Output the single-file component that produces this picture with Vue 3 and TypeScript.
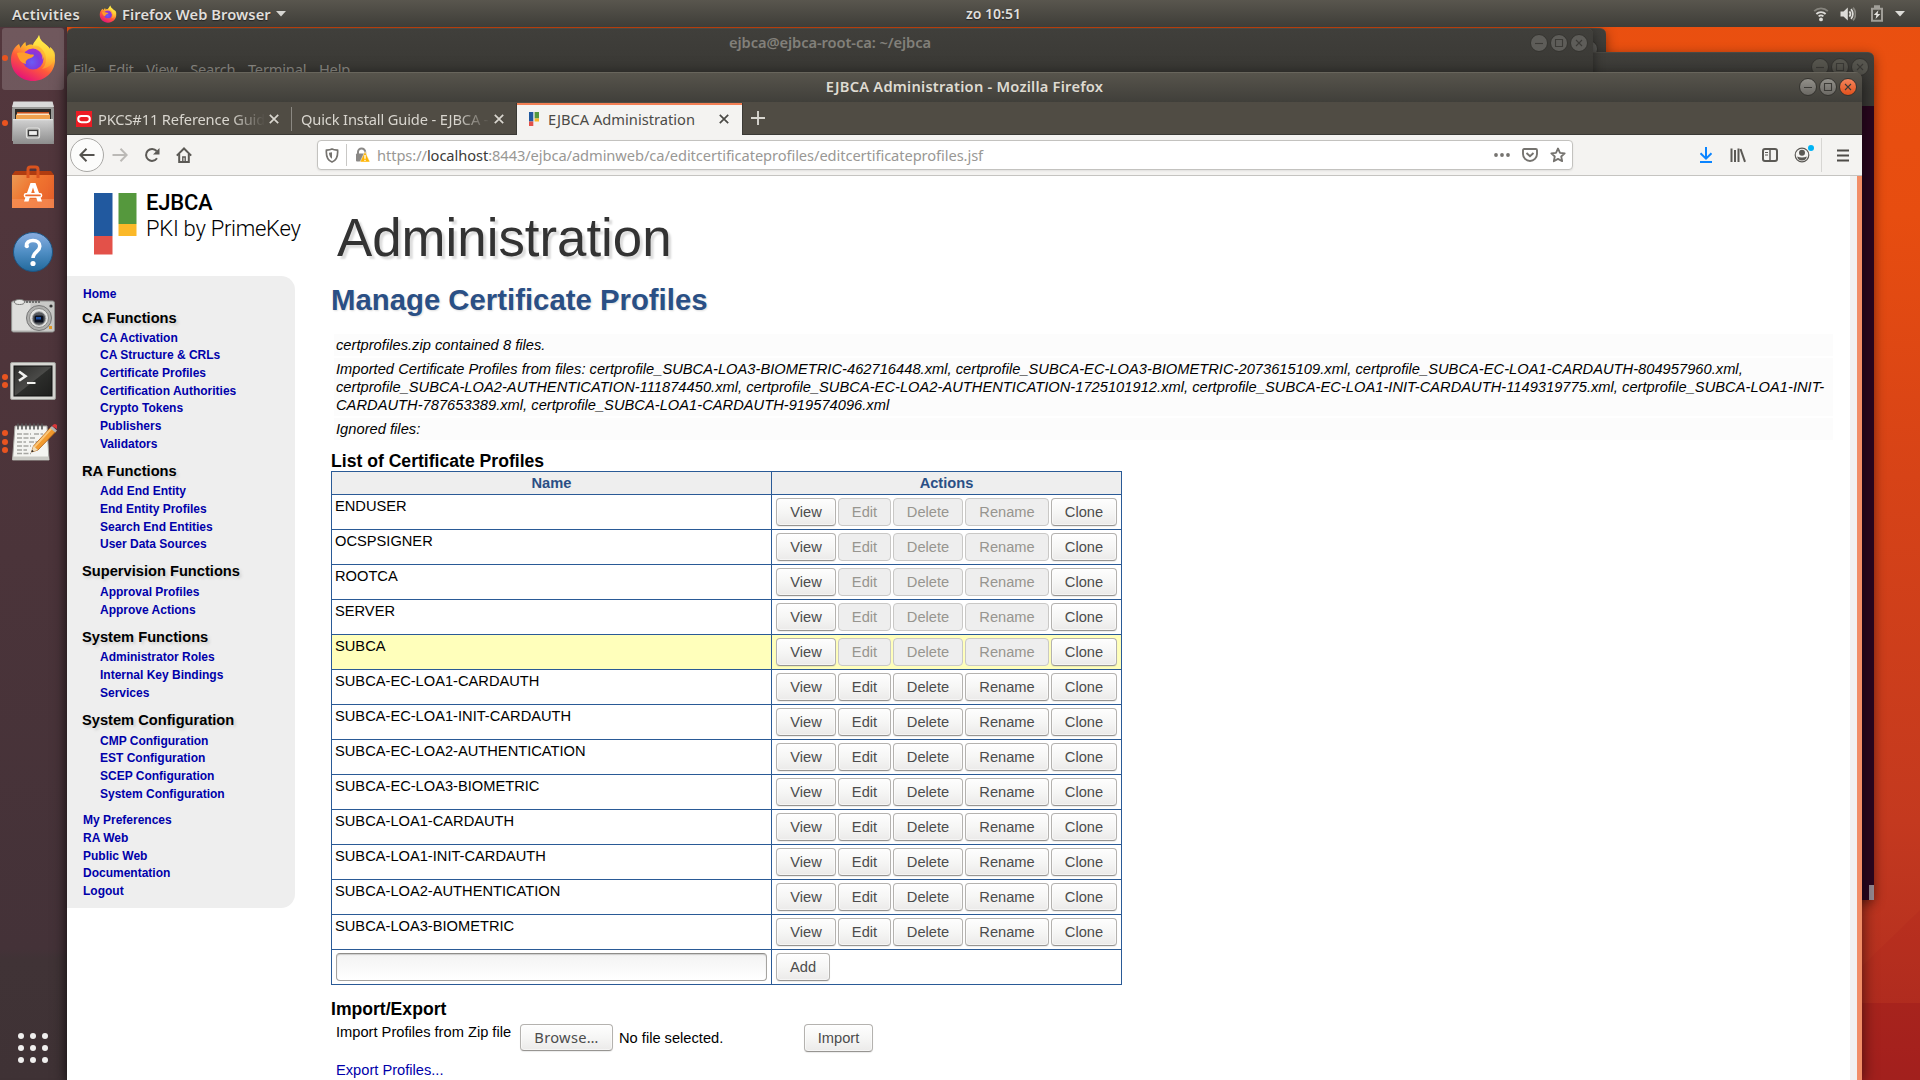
<script setup lang="ts">
interface NavGroup {
  title: string
  links: string[]
}

interface Profile {
  name: string
  fixed: boolean
  hovered?: boolean
}

const terminalMenu: string[] = ['File', 'Edit', 'View', 'Search', 'Terminal', 'Help']

const navGroups: NavGroup[] = [
  {
    title: 'CA Functions',
    links: [
      'CA Activation',
      'CA Structure & CRLs',
      'Certificate Profiles',
      'Certification Authorities',
      'Crypto Tokens',
      'Publishers',
      'Validators',
    ],
  },
  { title: 'RA Functions', links: ['Add End Entity', 'End Entity Profiles', 'Search End Entities', 'User Data Sources'] },
  { title: 'Supervision Functions', links: ['Approval Profiles', 'Approve Actions'] },
  { title: 'System Functions', links: ['Administrator Roles', 'Internal Key Bindings', 'Services'] },
  {
    title: 'System Configuration',
    links: ['CMP Configuration', 'EST Configuration', 'SCEP Configuration', 'System Configuration'],
  },
]

const footerLinks: string[] = ['My Preferences', 'RA Web', 'Public Web', 'Documentation', 'Logout']

const messages: string[][] = [
  ['certprofiles.zip contained 8 files.'],
  [
    'Imported Certificate Profiles from files: certprofile_SUBCA-LOA3-BIOMETRIC-462716448.xml, certprofile_SUBCA-EC-LOA3-BIOMETRIC-2073615109.xml, certprofile_SUBCA-EC-LOA1-CARDAUTH-804957960.xml,',
    'certprofile_SUBCA-LOA2-AUTHENTICATION-111874450.xml, certprofile_SUBCA-EC-LOA2-AUTHENTICATION-1725101912.xml, certprofile_SUBCA-EC-LOA1-INIT-CARDAUTH-1149319775.xml, certprofile_SUBCA-LOA1-INIT-',
    'CARDAUTH-787653389.xml, certprofile_SUBCA-LOA1-CARDAUTH-919574096.xml',
  ],
  ['Ignored files:'],
]

const profiles: Profile[] = [
  { name: 'ENDUSER', fixed: true },
  { name: 'OCSPSIGNER', fixed: true },
  { name: 'ROOTCA', fixed: true },
  { name: 'SERVER', fixed: true },
  { name: 'SUBCA', fixed: true, hovered: true },
  { name: 'SUBCA-EC-LOA1-CARDAUTH', fixed: false },
  { name: 'SUBCA-EC-LOA1-INIT-CARDAUTH', fixed: false },
  { name: 'SUBCA-EC-LOA2-AUTHENTICATION', fixed: false },
  { name: 'SUBCA-EC-LOA3-BIOMETRIC', fixed: false },
  { name: 'SUBCA-LOA1-CARDAUTH', fixed: false },
  { name: 'SUBCA-LOA1-INIT-CARDAUTH', fixed: false },
  { name: 'SUBCA-LOA2-AUTHENTICATION', fixed: false },
  { name: 'SUBCA-LOA3-BIOMETRIC', fixed: false },
]

const running: number[] = [1, 1, 0, 0, 0, 2, 3]
</script>

<template>
  <div class="desktop">
    <svg class="wallpaper" width="1920" height="1080" viewBox="0 0 1920 1080">
      <defs>
        <linearGradient id="wall" x1="0" y1="0" x2="0" y2="1">
          <stop offset="0" stop-color="#ea5010" />
          <stop offset="0.2" stop-color="#e74d10" />
          <stop offset="0.44" stop-color="#d74317" />
          <stop offset="0.76" stop-color="#c4391f" />
          <stop offset="1" stop-color="#ac2a20" />
        </linearGradient>
      </defs>
      <rect width="1920" height="1080" fill="url(#wall)" />
      <path d="M1800 1026 1920 910V1080H1800z" fill="#9c1022" opacity=".1" />
      <path d="M1800 1003H1920V1080H1800z" fill="#8e1018" opacity=".28" />
    </svg>

    <div class="win win-b"><i class="wbtn lone"></i></div>
    <div class="win win-c">
      <div class="win-buttons">
        <i class="wbtn"><svg viewBox="0 0 16 16"><path d="M4 8.5h8" /></svg></i>
        <i class="wbtn"><svg viewBox="0 0 16 16"><path d="M4.5 4.5h7v7h-7z" /></svg></i>
        <i class="wbtn"><svg viewBox="0 0 16 16"><path d="M5 5l6 6M11 5l-6 6" /></svg></i>
      </div>
      <div class="term-body"><i class="term-thumb"></i></div>
    </div>
    <div class="win win-a">
      <div class="win-title">ejbca@ejbca-root-ca: ~/ejbca</div>
      <div class="win-buttons">
        <i class="wbtn"><svg viewBox="0 0 16 16"><path d="M4 8.5h8" /></svg></i>
        <i class="wbtn"><svg viewBox="0 0 16 16"><path d="M4.5 4.5h7v7h-7z" /></svg></i>
        <i class="wbtn"><svg viewBox="0 0 16 16"><path d="M5 5l6 6M11 5l-6 6" /></svg></i>
      </div>
      <div class="term-menu"><span v-for="m in terminalMenu" :key="m">{{ m }}</span></div>
    </div>

    <header class="topbar">
      <span class="activities">Activities</span>
      <svg class="ff-small" width="18" height="18" viewBox="0 0 48 48"><use href="#firefox" /></svg>
      <span class="appname">Firefox Web Browser</span>
      <svg class="caret" width="10" height="6" viewBox="0 0 10 6"><path d="M0 0h10L5 5.5z" fill="#d6d5d1" /></svg>
      <span class="clock">zo 10:51</span>
      <div class="tray">
        <svg width="16" height="16" viewBox="0 0 16 16" fill="none" stroke="#dddcd8" stroke-width="1.8">
          <path d="M1.2 5.2a9.6 9.6 0 0 1 13.6 0" stroke="#86847d" />
          <path d="M3.4 8a6.5 6.5 0 0 1 9.2 0" />
          <path d="M5.6 10.4a3.6 3.6 0 0 1 4.8 0" />
          <circle cx="8" cy="13.4" r="1.9" fill="#dddcd8" stroke="none" />
        </svg>
        <svg width="16" height="16" viewBox="0 0 16 16" fill="none" stroke="#dddcd8" stroke-width="1.7">
          <path d="M0.5 5.4h3L7.8 1.6v12.8L3.5 10.6h-3z" fill="#dddcd8" stroke="none" />
          <path d="M9.4 5.4a4 4 0 0 1 0 5.2" />
          <path d="M11 3.2a7 7 0 0 1 0 9.6" />
          <path d="M13 1.6a9.5 9.5 0 0 1 0 12.8" stroke="#86847d" />
        </svg>
        <svg width="14" height="18" viewBox="0 0 14 18">
          <path d="M2 3.8h10v11.9H2zM5 1.2h4v2H5z" fill="none" stroke="#a09e98" stroke-width="2" />
          <path d="M8.4 5.2 3.8 10h2.6l-.8 4 4.8-5H7.6z" fill="#e2e1dd" />
        </svg>
        <svg width="10" height="6" viewBox="0 0 10 6"><path d="M0 0h10L5 5.5z" fill="#dddcd8" /></svg>
      </div>
    </header>

    <aside class="dock">
      <div v-for="(count, i) in running" :key="i" class="launcher" :class="{ active: i === 0, last: i === 6 }">
        <span class="dots"><i v-for="n in count" :key="n"></i></span>
        <svg v-if="i === 0" width="48" height="48" viewBox="0 0 48 48">
          <defs>
            <linearGradient id="ffBody" x1="0.8" y1="0.05" x2="0.3" y2="1">
              <stop offset="0" stop-color="#fff04a" />
              <stop offset="0.35" stop-color="#ffb52e" />
              <stop offset="0.62" stop-color="#ff5a3a" />
              <stop offset="1" stop-color="#e3107c" />
            </linearGradient>
            <radialGradient id="ffGlobe" cx="0.45" cy="0.65" r="0.6">
              <stop offset="0" stop-color="#6a5cf5" />
              <stop offset="0.6" stop-color="#7a3ce0" />
              <stop offset="1" stop-color="#a02fd0" />
            </radialGradient>
            <linearGradient id="ffFlame" x1="0.5" y1="0" x2="0.5" y2="1">
              <stop offset="0" stop-color="#fff44f" />
              <stop offset="0.6" stop-color="#ffd23a" />
              <stop offset="1" stop-color="#ff9a2a" />
            </linearGradient>
            <g id="firefox">
              <path
                d="M30 1c-1 4-5 6-6 10-3-1-5 0-7 1l-.5-4c-2 1-4 4-5 6l-1.500-4C5 13 2 19 2 26c0 12 10 21 22 21s22-9 22-21c0-5-2-10-5-13l.5 3C39 10 31 9 30 1z"
                fill="url(#ffBody)"
              />
              <path d="M30 1c-1 4-6 7-6 12 7-1 13 4 13 12 0 5-2 8-4 10 8-1 13-8 13-14 0-3-2-6-5-8l.5 3C39 10 31 9 30 1z" fill="url(#ffFlame)" opacity=".85" />
              <circle cx="24" cy="25" r="10.500" fill="url(#ffGlobe)" />
              <path d="M8 19c5-1 9 0 12 1 2 1 4 0 5 1-1 3-4 3-6 4-1 1-3 2-2 5-5-1-8-5-9-11z" fill="#ff9d2a" />
              <path d="M17 16c3-3 8-3 11 0 4 2 6 6 5 10 3-4 2-9-1-12-4-4-11-3-15 2z" fill="#ffb735" opacity=".7" />
            </g>
          </defs>
          <use href="#firefox" />
        </svg>
        <svg v-else-if="i === 1" width="48" height="48" viewBox="0 0 48 48">
          <defs>
            <linearGradient id="cab" x1="0" y1="0" x2="0" y2="1">
              <stop offset="0" stop-color="#d2d2d2" />
              <stop offset="1" stop-color="#8d8d8d" />
            </linearGradient>
          </defs>
          <path d="M4.500 3h39l1.500 7v32H3V10z" fill="#9a9a98" />
          <path d="M4.500 2.500h39L45 8H3z" fill="#dadada" />
          <path d="M6 10h36v12H6z" fill="#2b2a28" />
          <path d="M8 13h32v6H8z" fill="#c8501c" />
          <path d="M7 15.500h34v5H7z" fill="#f0a24e" />
          <path d="M8 14.500h32v1.500H8z" fill="#fbe5c6" />
          <path d="M4 20h40l1 25H4z" fill="url(#cab)" />
          <path d="M4 20h40v1.200H4z" fill="#e4e4e2" />
          <rect x="17.500" y="29" width="13" height="10" rx="2" fill="#a5a5a3" stroke="#e3e3e1" stroke-width="1.200" />
          <rect x="19.500" y="31.500" width="9" height="5" fill="#efefee" stroke="#3c3c3c" stroke-width="1.200" />
        </svg>
        <svg v-else-if="i === 2" width="48" height="48" viewBox="0 0 48 48">
          <defs>
            <linearGradient id="bag" x1="0" y1="0" x2="1" y2="0.6">
              <stop offset="0" stop-color="#ea9a55" />
              <stop offset="0.5" stop-color="#f0752f" />
              <stop offset="1" stop-color="#e9632c" />
            </linearGradient>
          </defs>
          <path d="M3 12 6 8h36l3 4z" fill="#b03c10" />
          <path d="M3 12h42v33H3z" fill="url(#bag)" />
          <path d="M3 36h42v9H3z" fill="#f79058" opacity=".7" />
          <path d="M19 15V6.500Q19 4 21.500 4h5Q29 4 29 6.500V15" fill="none" stroke="#d9531e" stroke-width="3" />
          <path d="M21.500 20h5L33 38.500h-4.500L24 24.500l-4.500 14H15z" fill="#fff" />
          <rect x="15.500" y="30.700" width="17" height="3.400" rx="1.400" fill="#ee6a2c" stroke="#fff" stroke-width="1.500" />
        </svg>
        <svg v-else-if="i === 3" width="48" height="48" viewBox="0 0 48 48">
          <defs>
            <linearGradient id="help" x1="0" y1="0" x2="0" y2="1">
              <stop offset="0" stop-color="#8aade0" />
              <stop offset="0.5" stop-color="#4f8ec4" />
              <stop offset="1" stop-color="#22699c" />
            </linearGradient>
          </defs>
          <circle cx="24" cy="24" r="19.500" fill="url(#help)" stroke="#1d5583" />
          <path d="M17.500 18.500c-.5-4 2.500-6 6.500-6 4.200 0 6.800 2.300 6.800 5.700 0 5.300-6.600 5.500-6.800 11.800" fill="none" stroke="#fff" stroke-width="3.600" />
          <circle cx="17.900" cy="18.300" r="2" fill="#fff" />
          <circle cx="24" cy="35.500" r="2.600" fill="#fff" />
        </svg>
        <svg v-else-if="i === 4" width="48" height="48" viewBox="0 0 48 48">
          <rect x="2.500" y="9" width="43" height="31" rx="2" fill="#c9c9c7" stroke="#8e8e8c" />
          <rect x="3.500" y="11" width="18" height="27" fill="#dededc" />
          <ellipse cx="10.500" cy="10" rx="5" ry="2.500" fill="#e8e8e6" stroke="#787876" />
          <path d="M17 10h15" stroke="#555" stroke-dasharray="2 1" stroke-width="1.500" />
          <circle cx="42" cy="14" r="1.600" fill="#333" />
          <circle cx="30" cy="26" r="12.500" fill="#b0b0ae" stroke="#777" />
          <circle cx="30" cy="26" r="9.500" fill="#e3e3e1" stroke="#8a8a88" />
          <circle cx="30" cy="26.500" r="6.800" fill="#55585c" stroke="#aaa" />
          <rect x="25.500" y="23.500" width="9" height="7" rx="1.500" fill="#0a0e1c" />
          <path d="M27 25h5v2.500h-5z" fill="#1c4e9e" />
          <rect x="40" y="34" width="3" height="3" fill="#e39a28" />
        </svg>
        <svg v-else-if="i === 5" width="48" height="48" viewBox="0 0 48 48">
          <defs>
            <linearGradient id="scr" x1="0" y1="0" x2="1" y2="1">
              <stop offset="0" stop-color="#2c2c2a" />
              <stop offset="0.5" stop-color="#4a4a48" />
              <stop offset="0.52" stop-color="#2c2d2b" />
              <stop offset="1" stop-color="#1f1f1e" />
            </linearGradient>
          </defs>
          <rect x="1.500" y="5.500" width="45" height="37" rx="1.500" fill="#d8d8d4" stroke="#a0a09c" />
          <rect x="5" y="9" width="38" height="30" fill="url(#scr)" stroke="#111" />
          <path d="m10 14.500 6.500 4.700-6.500 4.600" fill="none" stroke="#f2f2f0" stroke-width="2.600" />
          <path d="M18 26h8.500" stroke="#f2f2f0" stroke-width="2" />
        </svg>
        <svg v-else width="48" height="48" viewBox="0 0 48 48">
          <path d="M6 8h32l2 34H3.500z" fill="#f4f4f1" stroke="#a5a5a0" />
          <path d="M3.800 38.500h36.100l.3 3.500H3.500z" fill="#c9c9c4" />
          <path d="M8 16h14M25 16h9M8 20h18M8 24h9M20 24h10M8 28h14M8 32h10M8 35.500h14" stroke="#a6a6a2" stroke-width="1.300" stroke-dasharray="5 1.500" />
          <path d="M9 5.500v6M13 5.500v6M17 5.500v6M21 5.500v6M25 5.500v6M29 5.500v6M33 5.500v6" stroke="#555" stroke-width="1.600" />
          <path d="m22.500 34 2-6L42 9l5 4.500L29 32z" fill="#f29a2e" stroke="#a85a14" stroke-width=".8" />
          <path d="m24.500 28.500 17-18.500 1.500 1.200L26 29.800z" fill="#fbc678" />
          <path d="m22.500 34 2-6 4.500 4z" fill="#efdcb8" />
          <path d="m22.300 34.300.8-2.500 1.700 1.600z" fill="#222" />
          <path d="m41 10 2-2 5 4.500-1.700 2z" fill="#b8b8b6" />
          <path d="m43 8 1.500-1.500Q46 5.500 48 7t0 4z" fill="#e0393b" />
        </svg>
      </div>
      <svg class="apps" width="30" height="30" viewBox="0 0 30 30" fill="#f0efee">
        <template v-for="r in 3" :key="r">
          <circle v-for="c in 3" :key="c" :cx="c * 12 - 9" :cy="r * 12 - 9" r="3" />
        </template>
      </svg>
    </aside>

    <section class="firefox">
      <div class="titlebar">
        <div class="ff-title">EJBCA Administration - Mozilla Firefox</div>
        <div class="win-buttons">
          <i class="wbtn lit"><svg viewBox="0 0 16 16"><path d="M4 8.500h8" /></svg></i>
          <i class="wbtn lit"><svg viewBox="0 0 16 16"><path d="M4.500 4.500h7v7h-7z" /></svg></i>
          <i class="wbtn lit close"><svg viewBox="0 0 16 16"><path d="M5 5l6 6M11 5l-6 6" /></svg></i>
        </div>
      </div>
      <div class="tabs">
        <div class="tab">
          <svg class="fav" width="16" height="16" viewBox="0 0 16 16">
            <rect width="16" height="16" fill="#ec1c24" />
            <rect x="2.200" y="5" width="11.600" height="6.200" rx="3.100" fill="none" stroke="#fff" stroke-width="2" />
          </svg>
          <span class="tab-label faded">PKCS#11 Reference Guid</span>
          <svg class="x" viewBox="0 0 10 10"><path d="M.8.8l8.400 8.400M9.200.8.800 9.200" /></svg>
        </div>
        <div class="tab second">
          <span class="tab-label faded">Quick Install Guide - EJBCA -</span>
          <svg class="x" viewBox="0 0 10 10"><path d="M.8.8l8.400 8.400M9.200.8.800 9.200" /></svg>
        </div>
        <div class="tab current">
          <svg class="fav slim" width="10" height="14" viewBox="0 0 10 14">
            <path d="M0 0h4.300v9.500H0z" fill="#21599f" /><path d="M0 9.500h4.300V14H0z" fill="#e35149" />
            <path d="M5.600 0H10v6.500H5.600z" fill="#55983d" /><path d="M5.600 6.500H10v3H5.600z" fill="#fbb929" />
          </svg>
          <span class="tab-label">EJBCA Administration</span>
          <svg class="x" viewBox="0 0 10 10"><path d="M.8.8l8.400 8.400M9.200.8.800 9.200" /></svg>
        </div>
        <svg class="plus" width="14" height="14" viewBox="0 0 14 14"><path d="M7 0v14M0 7h14" stroke="#d8d6d0" stroke-width="1.900" /></svg>
      </div>
      <div class="toolbar">
        <span class="back">
          <svg width="16" height="16" viewBox="0 0 16 16"><path d="M15.500 8H1.500M7.500 1.800 1.300 8l6.200 6.200" fill="none" stroke="#55534f" stroke-width="2" /></svg>
        </span>
        <svg class="fwd" width="16" height="16" viewBox="0 0 16 16"><path d="M.5 8h14M8.500 1.800 14.700 8l-6.200 6.200" fill="none" stroke="#bbb9b6" stroke-width="2" /></svg>
        <svg class="reload" width="16" height="16" viewBox="0 0 16 16">
          <path d="M13 11.300A6 6 0 1 1 12.600 4" fill="none" stroke="#5b5955" stroke-width="2" />
          <path d="M15.500 1v6.500H9z" fill="#5b5955" />
        </svg>
        <svg class="home" width="16" height="16" viewBox="0 0 16 16" fill="none" stroke="#5b5955" stroke-width="2">
          <path d="M.8 8.600 8 1.500l7.200 7.100" />
          <path d="M3.200 7v8h9.600V7" />
          <path d="M6.800 15v-5h2.400v5" stroke-width="1.400" />
        </svg>
        <div class="urlbar">
          <svg class="shield" width="14" height="15" viewBox="0 0 14 15">
            <path d="M7 1c2 .8 4 1 5.600 1.200C13 8 11.500 12.500 7 14 2.500 12.500 1 8 1.400 2.200 3 2 5 1.800 7 1z" fill="none" stroke="#75736f" stroke-width="1.700" />
            <path d="M7 4.200v6.600c-2-1-3-3.500-3-6z" fill="#75736f" />
          </svg>
          <i class="usep"></i>
          <svg class="lock" width="15" height="16" viewBox="0 0 15 16">
            <path d="M3 7V5a3.600 3.600 0 0 1 7.200 0v2" fill="none" stroke="#8a8886" stroke-width="2" />
            <rect x="1" y="6.500" width="10.500" height="8" rx="1" fill="#8a8886" />
            <path d="M10 4.500 15 15H5z" fill="#ffb400" stroke="#fff" stroke-width=".5" />
            <path d="M10 8v3.800M10 12.800v1.200" stroke="#fff" stroke-width="1.300" />
          </svg>
          <span class="url">https://<b>localhost</b>:8443/ejbca/adminweb/ca/editcertificateprofiles/editcertificateprofiles.jsf</span>
          <svg class="more" width="16" height="4" viewBox="0 0 16 4" fill="#75736f"><circle cx="2" cy="2" r="1.900" /><circle cx="8" cy="2" r="1.900" /><circle cx="14" cy="2" r="1.900" /></svg>
          <svg class="pocket" width="16" height="14" viewBox="0 0 16 14" fill="none" stroke="#75736f" stroke-width="1.900">
            <path d="M2.200 1h11.600q1.200 0 1.200 1.200V6a7 7 0 0 1-14 0V2.200Q1 1 2.200 1z" />
            <path d="m4.500 5 3.500 3.300L11.500 5" />
          </svg>
          <svg width="16" height="16" viewBox="0 0 16 16"><path d="m8 1.500 2 4.300 4.700.5-3.500 3.200 1 4.700L8 11.900l-4.200 2.300 1-4.700L1.300 6.300 6 5.800z" fill="none" stroke="#75736f" stroke-width="1.800" stroke-linejoin="round" /></svg>
        </div>
        <div class="tools">
          <svg width="16" height="16" viewBox="0 0 16 16" fill="none" stroke="#0a84ff" stroke-width="2"><path d="M8 0v11.500M2.500 6.200 8 11.700l5.500-5.500M2 15h12" /></svg>
          <svg width="16" height="16" viewBox="0 0 16 16" fill="none" stroke="#5b5955" stroke-width="2"><path d="M1.500 1.500v13.500M5 3v12M8.500 1.500v13.500" /><path d="M10.500 2 15 14.800" /></svg>
          <svg width="16" height="16" viewBox="0 0 16 16" fill="none" stroke="#5b5955" stroke-width="2"><rect x="1" y="2" width="14" height="12" rx="2" /><path d="M8 2v12" stroke-width="1.500" /><path d="M3 5.500h3M3 8h3" stroke-width="1.100" /></svg>
          <span class="account">
            <svg width="16" height="16" viewBox="0 0 16 16"><circle cx="8" cy="8" r="6.800" fill="none" stroke="#5b5955" stroke-width="1.200" /><circle cx="8" cy="5.800" r="3" fill="#5b5955" /><path d="M3.200 9.500q4.800 2 9.600 0-.5 4-4.800 4t-4.800-4z" fill="#5b5955" /></svg>
            <i></i>
          </span>
          <i class="tsep"></i>
          <svg width="12" height="13" viewBox="0 0 12 13"><path d="M0 1.500h12M0 6.500h12M0 11.500h12" stroke="#4d4b47" stroke-width="2" /></svg>
        </div>
      </div>

      <div class="viewport">
        <div class="page">
          <div class="left">
            <div class="logo">
              <svg width="43" height="62" viewBox="0 0 43 62">
                <path d="M0 0h18.500v43H0z" fill="#21599f" /><path d="M0 43h18.500v18.500H0z" fill="#e35149" />
                <path d="M24.500 0h18v31h-18z" fill="#55983d" /><path d="M24.500 31h18v12h-18z" fill="#fbb929" />
              </svg>
              <div class="logo-text"><strong>EJBCA</strong><span>PKI by PrimeKey</span></div>
            </div>
            <nav class="nav">
              <a class="top">Home</a>
              <template v-for="g in navGroups" :key="g.title">
                <h4>{{ g.title }}</h4>
                <a v-for="l in g.links" :key="l">{{ l }}</a>
              </template>
              <div class="nav-foot"><a v-for="l in footerLinks" :key="l" class="top">{{ l }}</a></div>
            </nav>
          </div>
          <main class="main">
            <h1>Administration</h1>
            <h2>Manage Certificate Profiles</h2>
            <ul class="messages">
              <li v-for="(m, i) in messages" :key="i"><div v-for="(line, j) in m" :key="j">{{ line }}</div></li>
            </ul>
            <h3>List of Certificate Profiles</h3>
            <div class="table">
              <div class="row head"><div class="name">Name</div><div class="actions">Actions</div></div>
              <div v-for="p in profiles" :key="p.name" class="row" :class="{ hovered: p.hovered }">
                <div class="name">{{ p.name }}</div>
                <div class="actions">
                  <button class="btn view">View</button>
                  <button class="btn edit" :disabled="p.fixed">Edit</button>
                  <button class="btn delete" :disabled="p.fixed">Delete</button>
                  <button class="btn rename" :disabled="p.fixed">Rename</button>
                  <button class="btn clone">Clone</button>
                </div>
              </div>
              <div class="row">
                <div class="name field"><input type="text" /></div>
                <div class="actions"><button class="btn add">Add</button></div>
              </div>
            </div>
            <h3 class="second-h3">Import/Export</h3>
            <div class="import">
              <span class="import-label">Import Profiles from Zip file</span>
              <button class="btn browse">Browse…</button>
              <span class="nofile">No file selected.</span>
              <button class="btn import-btn">Import</button>
            </div>
            <a class="export">Export Profiles...</a>
          </main>
        </div>
        <div class="scrollbar"><i></i></div>
      </div>
    </section>
  </div>
</template>

<style>
body {
  margin: 0;
  overflow: hidden;
}
</style>

<style scoped>
* {
  box-sizing: border-box;
}
i {
  font-style: normal;
  display: block;
}
svg {
  display: block;
  flex: none;
}
.desktop {
  position: relative;
  width: 1920px;
  height: 1080px;
  overflow: hidden;
  font-family: 'Noto Sans', 'Open Sans', sans-serif;
  font-size: 14.67px;
}
.wallpaper {
  position: absolute;
  inset: 0;
}

/* GNOME top bar */
.topbar {
  position: absolute;
  inset: 0 0 auto 0;
  height: 27px;
  display: flex;
  align-items: center;
  padding-left: 12px;
  background: linear-gradient(#59564e, #3e3d38);
  color: #e0dfdb;
  font-weight: 600;
  font-size: 14.67px;
  text-shadow: 0 1px 1px #222;
  white-space: nowrap;
}
.activities {
  width: 87px;
  letter-spacing: 0.25px;
}
.ff-small {
  margin-right: 5px;
}
.appname {
  width: 154px;
  letter-spacing: 0.1px;
}
.clock {
  position: absolute;
  left: 966px;
  font-size: 14px;
}
.tray {
  position: absolute;
  right: 15px;
  display: flex;
  align-items: center;
}
.tray svg:nth-child(1) {
  margin-right: 11px;
}
.tray svg:nth-child(2) {
  margin-right: 14px;
}
.tray svg:nth-child(3) {
  margin-right: 11px;
}

/* Dock */
.dock {
  position: absolute;
  left: 0;
  top: 27px;
  width: 67px;
  height: 1053px;
  background: linear-gradient(#53373d, #4b343a 50%, #443238 87.5%, #403336 88.500%, #3f3235);
  box-shadow: inset -6px 0 6px -4px rgba(0, 0, 0, 0.2);
}
.launcher {
  height: 64.5px;
  display: flex;
  align-items: center;
  position: relative;
  padding-left: 9px;
}
.launcher.active::before {
  content: '';
  position: absolute;
  left: 2px;
  top: 1px;
  width: 62px;
  height: 62px;
  border-radius: 3px;
  background: rgba(255, 255, 255, 0.17);
}
.launcher svg {
  position: relative;
  top: -1px;
}
.launcher.last {
  margin-top: -3.5px;
}
.dots {
  position: absolute;
  left: 2px;
  top: 0;
  bottom: 2px;
  display: flex;
  flex-direction: column;
  justify-content: center;
  gap: 2.400px;
}
.dots i {
  width: 6px;
  height: 6px;
  border-radius: 50%;
  background: #e95420;
}
.apps {
  position: absolute;
  left: 18px;
  bottom: 17px;
}

/* Windows */
.win {
  position: absolute;
  background: linear-gradient(#403f3b, #3a3935 40px);
  border-radius: 6px 6px 0 0;
  border-top: 1px solid #4a4944;
  box-shadow: 0 3px 12px rgba(0, 0, 0, 0.45);
}
.win-a {
  left: 67px;
  top: 28px;
  width: 1526px;
  height: 60px;
}
.win-b {
  left: 90px;
  top: 28px;
  width: 1516px;
  height: 60px;
}
.win-c {
  left: 400px;
  top: 52px;
  width: 1474px;
  height: 848px;
}
.win-title {
  text-align: center;
  line-height: 26px;
  font-weight: 600;
  color: #82807a;
  letter-spacing: -0.08px;
}
.term-body {
  position: absolute;
  top: 53px;
  bottom: 0;
  left: 0;
  right: 0;
  background: #2a061f;
}
.term-thumb {
  position: absolute;
  right: 0;
  bottom: 0;
  width: 5px;
  height: 15px;
  background: #958a92;
}
.term-menu {
  display: flex;
  gap: 12.6px;
  padding-left: 6px;
  line-height: 28px;
  color: #8d8b85;
  letter-spacing: -0.2px;
}
.win-buttons {
  position: absolute;
  right: 5px;
  top: 5px;
  display: flex;
  gap: 2px;
}
.wbtn {
  width: 18px;
  height: 18px;
  border-radius: 50%;
  border: 1px solid #353430;
  background: #5e5d59;
}
.win-c .wbtn {
  background: #57564f;
}
.wbtn.lone {
  position: absolute;
  right: 8px;
  top: 11px;
}
.wbtn svg {
  width: 16px;
  height: 16px;
  fill: none;
  stroke: #3c3b37;
  stroke-width: 1.1;
}
.wbtn.lit {
  background: linear-gradient(#92908a, #6b6964);
}
.wbtn.lit.close {
  background: linear-gradient(#f4845c, #e2511c);
}

.firefox {
  position: absolute;
  left: 67px;
  top: 72px;
  width: 1795px;
  height: 1008px;
  border-radius: 7px 7px 0 0;
  overflow: hidden;
  display: flex;
  flex-direction: column;
  box-shadow: 0 3px 16px rgba(0, 0, 0, 0.6);
  background: #504c44;
}
.titlebar {
  height: 30px;
  flex: none;
  position: relative;
  border-top: 1px solid #68655c;
  background: linear-gradient(#57544c, #403f3a);
}
.ff-title {
  text-align: center;
  line-height: 27px;
  font-weight: 600;
  letter-spacing: 0.22px;
  color: #dfdbd2;
}
.tabs {
  height: 33px;
  flex: none;
  display: flex;
  background: #504c44;
  border-bottom: 1px solid #3a3935;
  color: #d9d6cf;
}
.tab {
  width: 225px;
  height: 33px;
  display: flex;
  align-items: center;
  padding: 0 13px 0 9px;
  flex: none;
}
.tab.second {
  padding-left: 9px;
  position: relative;
}
.tab.second::before {
  content: '';
  position: absolute;
  left: -1px;
  top: 5px;
  height: 24px;
  width: 1px;
  background: #8b8882;
}
.tab.current {
  background: #f4f3f1;
  border-top: 2px solid #f37f54;
  height: 32px;
  margin-top: 1px;
  color: #4b4a46;
  padding-left: 12px;
  padding-bottom: 3px;
  box-shadow: -1px 0 0 #3a3935, 1px 0 0 #3a3935;
}
.fav {
  margin-right: 6px;
}
.fav.slim {
  margin-right: 9px;
}
.tab-label {
  flex: 1;
  min-width: 0;
  white-space: nowrap;
  margin-right: 4px;
}
.tab-label.faded {
  letter-spacing: -0.15px;
  mask-image: linear-gradient(to right, #000 calc(100% - 34px), transparent);
}
.x {
  width: 10px;
  height: 10px;
  fill: none;
  stroke: currentColor;
  stroke-width: 1.700;
}
.plus {
  margin: 9px 0 0 9px;
}
.toolbar {
  height: 41px;
  flex: none;
  display: flex;
  align-items: center;
  background: #f4f3f1;
  border-bottom: 1px solid #c5c4c1;
  padding-left: 3px;
}
.back {
  width: 34px;
  height: 34px;
  border-radius: 50%;
  border: 1px solid #a9a8a5;
  background: #fcfcfb;
  display: flex;
  align-items: center;
  justify-content: center;
}
.fwd {
  margin-left: 8px;
}
.reload {
  margin-left: 16px;
}
.home {
  margin-left: 16px;
}
.urlbar {
  margin-left: 125px;
  width: 1256px;
  flex: none;
  height: 30px;
  background: #fff;
  border: 1px solid #c3c2bf;
  border-radius: 4px;
  display: flex;
  align-items: center;
  padding: 0 6px 0 7px;
  box-shadow: 0 1px 2px rgba(0, 0, 0, 0.08);
}
.usep {
  width: 1px;
  height: 22px;
  background: #c9c8c6;
  margin: 0 8px 0 7px;
}
.url {
  margin-left: 7px;
  color: #999895;
  flex: 1;
  white-space: nowrap;
  letter-spacing: -0.075px;
}
.url b {
  font-weight: 400;
  color: #3b3a38;
}
.more {
  margin-right: 12px;
}
.pocket {
  margin-right: 12px;
}
.tools {
  margin-left: 125px;
  display: flex;
  align-items: center;
}
.tools > svg {
  margin-right: 16px;
}
.tools > svg:last-child {
  margin-right: 0;
}
.account {
  position: relative;
  margin-right: 11px;
}
.account i {
  position: absolute;
  right: -4px;
  top: -2px;
  width: 6px;
  height: 6px;
  border-radius: 50%;
  background: #00b3f4;
}
.tsep {
  width: 1px;
  height: 34px;
  background: #d7d6d3;
  margin-right: 15px;
}

/* Page */
.viewport {
  flex: 1;
  display: flex;
  background: #fff;
  min-height: 0;
}
.scrollbar {
  width: 12px;
  background: #f2f1f0;
  display: flex;
  justify-content: flex-end;
}
.scrollbar i {
  width: 5px;
  background: #f28e67;
}
.page {
  flex: 1;
  display: flex;
  font-family: 'Liberation Sans', Arial, sans-serif;
  font-size: 14.67px;
  color: #000;
}
.left {
  width: 228px;
  flex: none;
}
.logo {
  height: 100px;
  display: flex;
  padding: 17px 0 0 26.500px;
}
.logo-text {
  margin-left: 9.500px;
  font-family: Roboto, sans-serif;
  display: flex;
  flex-direction: column;
  font-size: 22px;
  line-height: 26px;
  white-space: nowrap;
  margin-top: -3px;
}
.logo-text strong {
  font-weight: 500;
  letter-spacing: -0.2px;
}
.logo-text span {
  font-weight: 300;
  letter-spacing: -0.27px;
}
.nav {
  height: 632px;
  background: #eee;
  border-radius: 0 14px 14px 0;
  padding-top: 10px;
  display: flex;
  flex-direction: column;
}
.nav a {
  font-size: 12px;
  font-weight: bold;
  line-height: 17.700px;
  height: 17.700px;
  color: #0000aa;
  padding-left: 33px;
  display: block;
}
.nav a.top {
  padding-left: 16px;
}
.nav h4 {
  margin: 8.200px 0 3.800px;
  padding-left: 15px;
  font-size: 14.67px;
  line-height: 18px;
  text-shadow: 2px 2px 3px #ccc;
}
.nav a.top + h4 {
  margin-top: 5.300px;
  margin-bottom: 2.600px;
}
.nav-foot {
  margin-top: 9px;
}
.main {
  margin-left: 36px;
}
h1 {
  margin: 0;
  padding: 32px 0 0 6px;
  height: 100px;
  font-size: 52.800px;
  line-height: 60px;
  font-weight: 400;
  color: #333;
  text-shadow: 3px 3px 2px #ddd;
}
h2 {
  margin: 7px 0 0;
  height: 51px;
  font-size: 29.330px;
  line-height: 34px;
  color: #2a4f85;
  text-shadow: 1px 1px 2px #ddd;
}
.messages {
  list-style: none;
  margin: 0 0 11px 3px;
  padding: 0;
  width: 1499px;
  display: flex;
  flex-direction: column;
  gap: 2px;
  font-style: italic;
  letter-spacing: 0.026px;
}
.messages li {
  background: #fcfcfc;
  padding: 2px;
  line-height: 18px;
  white-space: nowrap;
}
h3 {
  margin: 0;
  font-size: 17.600px;
  line-height: 20px;
}
.table {
  width: 791px;
  border: 1px solid #2a5a96;
}
.row {
  display: flex;
  height: 35px;
  border-top: 1px solid #2a5a96;
}
.row.head {
  height: 22px;
  border-top: 0;
  background: #eee;
  color: #2a4f85;
  font-weight: bold;
  line-height: 22px;
  text-align: center;
}
.row.hovered {
  background: #ffffbb;
}
.name {
  width: 440px;
  border-right: 1px solid #2a5a96;
  padding: 2px 3px;
  line-height: 18px;
}
.head .name {
  padding: 0;
  line-height: 22px;
}
.actions {
  flex: 1;
  display: flex;
  gap: 2px;
  padding: 3px 4px;
}
.head .actions {
  display: block;
  padding: 0;
}
.field {
  padding: 3px 4px;
}
.field input {
  display: block;
  width: 431px;
  height: 28px;
  border: 1px solid #a5a3a0;
  border-top-color: #8f8d8a;
  border-radius: 4px;
  background: linear-gradient(#f3f3f3, #fff);
  box-shadow: inset 0 1px 1px #ccc;
}
.btn {
  font-family: 'Liberation Sans', Arial, sans-serif;
  font-size: 14.67px;
  height: 28px;
  padding: 0;
  border: 1px solid #b4b2af;
  border-bottom-color: #979592;
  border-radius: 4px;
  background: linear-gradient(#fefefe, #f6f6f5 50%, #ebeae9);
  box-shadow: inset 0 0 0 1px rgba(255, 255, 255, 0.5), 0 1px 1px rgba(0, 0, 0, 0.08);
  color: #4c4c4c;
  flex: none;
}
.btn:disabled {
  background: #eee;
  border-color: #c9c8c6;
  box-shadow: none;
  color: #97958f;
}
.view {
  width: 60px;
}
.edit {
  width: 53px;
}
.delete {
  width: 70px;
}
.rename {
  width: 84px;
}
.clone {
  width: 66px;
}
.add {
  width: 54px;
}
.second-h3 {
  margin-top: 14px;
}
.import {
  display: flex;
  align-items: flex-start;
  padding: 5px 0 0 5px;
  height: 42px;
}
.import-label {
  width: 184px;
  line-height: 18px;
  margin-top: -1px;
}
.btn.browse {
  width: 93px;
  height: 27px;
  font-family: 'Noto Sans', sans-serif;
  letter-spacing: 0.3px;
  padding-bottom: 1px;
}
.nofile {
  width: 191px;
  padding-left: 6px;
  margin-top: 5px;
  line-height: 18px;
}
.import-btn {
  width: 69px;
}
.export {
  display: block;
  padding-left: 5px;
  line-height: 18px;
  color: #0000aa;
}
</style>
